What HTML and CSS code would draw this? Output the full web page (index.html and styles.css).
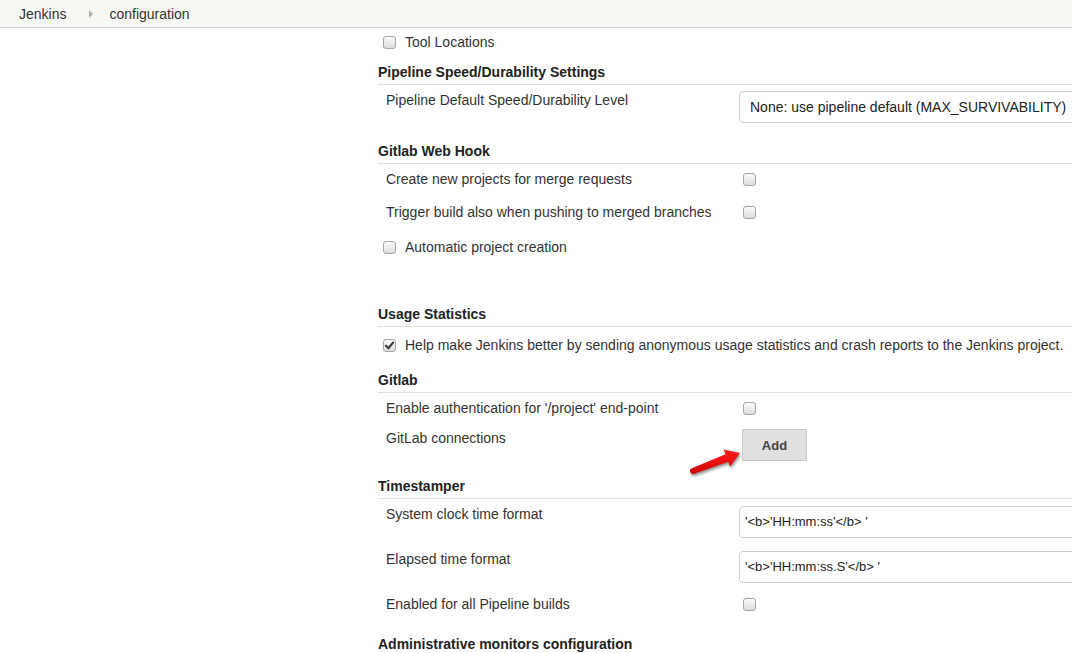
FILE: index.html
```html
<!DOCTYPE html>
<html>
<head>
<meta charset="utf-8">
<title>Jenkins configuration</title>
<link rel="stylesheet" href="styles.css">
</head>
<body>
<header class="topbar">
  <a class="crumb">Jenkins</a>
  <span class="crumb-sep"></span>
  <a class="crumb">configuration</a>
</header>

<main class="main">
  <div class="optional tool">
    <input type="checkbox" class="cb">
    <span>Tool Locations</span>
  </div>

  <div class="heading h-pipeline">Pipeline Speed/Durability Settings</div>
  <div class="row row-field r-pipeline">
    <div class="label">Pipeline Default Speed/Durability Level</div>
    <div class="value"><div class="select">None: use pipeline default (MAX_SURVIVABILITY)</div></div>
  </div>

  <div class="heading h-webhook">Gitlab Web Hook</div>
  <div class="row">
    <div class="label">Create new projects for merge requests</div>
    <div class="value"><input type="checkbox" class="cb"></div>
  </div>
  <div class="row">
    <div class="label">Trigger build also when pushing to merged branches</div>
    <div class="value"><input type="checkbox" class="cb"></div>
  </div>
  <div class="optional auto">
    <input type="checkbox" class="cb">
    <span>Automatic project creation</span>
  </div>

  <div class="heading h-usage">Usage Statistics</div>
  <div class="optional usage">
    <span class="cb checked"><svg viewBox="0 0 13 13" width="13" height="13"><path d="M3 6.8 L5.4 9.2 L10 3.6" fill="none" stroke="#333" stroke-width="2" stroke-linecap="square"/></svg></span>
    <span>Help make Jenkins better by sending anonymous usage statistics and crash reports to the Jenkins project.</span>
  </div>

  <div class="heading h-gitlab">Gitlab</div>
  <div class="row">
    <div class="label">Enable authentication for '/project' end-point</div>
    <div class="value"><input type="checkbox" class="cb"></div>
  </div>
  <div class="row row-button">
    <div class="label">GitLab connections</div>
    <div class="value">
      <button class="btn">Add</button>
      <svg class="arrow" viewBox="0 0 60 34" width="60" height="34">
        <defs>
          <linearGradient id="red" x1="0" y1="0" x2="0" y2="1">
            <stop offset="0" stop-color="#ff2020"/>
            <stop offset="1" stop-color="#d00000"/>
          </linearGradient>
        </defs>
        <path d="M5.9 23.2 L39.5 9.3 L37.7 4.6 L54 8 L44.1 21.4 L42.3 16.7 L8.1 28.8 A3 3 0 0 1 5.9 23.2 Z" fill="url(#red)"/>
      </svg>
    </div>
  </div>

  <div class="heading h-time">Timestamper</div>
  <div class="row row-field">
    <div class="label">System clock time format</div>
    <div class="value"><div class="input">'&lt;b&gt;'HH:mm:ss'&lt;/b&gt; '</div></div>
  </div>
  <div class="row row-field">
    <div class="label">Elapsed time format</div>
    <div class="value"><div class="input">'&lt;b&gt;'HH:mm:ss.S'&lt;/b&gt; '</div></div>
  </div>
  <div class="row">
    <div class="label">Enabled for all Pipeline builds</div>
    <div class="value"><input type="checkbox" class="cb"></div>
  </div>

  <div class="heading h-admin">Administrative monitors configuration</div>
</main>
</body>
</html>
```

FILE: styles.css
```css
html, body {
  margin: 0;
  padding: 0;
  overflow: hidden;
  background: #fff;
}
body {
  font-family: "Liberation Sans", Arial, sans-serif;
  font-size: 14px;
  color: #333;
  line-height: 16px;
}
.topbar {
  height: 27px;
  background: #f6f8f3;
  border-bottom: 1px solid #d6d6d6;
  display: flex;
  align-items: center;
  padding-left: 19px;
}
.crumb {
  font-size: 14px;
  color: #333;
  text-decoration: none;
}
.crumb-sep {
  width: 0;
  height: 0;
  border-left: 4px solid #b0b0b0;
  border-top: 4px solid transparent;
  border-bottom: 4px solid transparent;
  margin: 0 16px 0 23px;
}
.main {
  margin-left: 378px;
  width: 900px;
}
.heading {
  font-weight: bold;
  line-height: 24px;
  border-bottom: 1px solid #e2e2e2;
  color: #222;
}
.h-pipeline { margin-top: 7px; }
.h-webhook { margin-top: 16px; }
.h-usage { margin-top: 47px; }
.h-gitlab { margin-top: 15px; }
.h-time { margin-top: 13px; }
.h-admin { margin-top: 10px; }

.optional {
  display: flex;
  align-items: center;
  padding-left: 5px;
  gap: 9px;
}
.tool { padding-top: 3px; height: 22px; }
.auto { padding-top: 9px; height: 16px; }
.usage { padding-top: 10px; height: 16px; }

.row {
  display: flex;
  align-items: flex-start;
  padding: 7px 0 10px;
}
.label {
  width: 353px;
  padding-left: 8px;
  flex: none;
}
.value {
  flex: 1;
  display: flex;
  align-items: flex-start;
  position: relative;
}
.row .value .cb { margin-left: 4px; margin-top: 2px; }

.row-field { padding: 7px 0 6px; }
.r-pipeline { padding-bottom: 0; }
.r-pipeline .value { margin-top: -1px; }

.select, .input {
  height: 30px;
  border: 1px solid #cfcfcf;
  border-radius: 4px;
  line-height: 30px;
  white-space: nowrap;
  width: 420px;
  color: #222;
  flex: none;
}
.select { padding-left: 10px; font-size: 14px; }
.input { padding-left: 5px; font-size: 13px; }

.row-button { padding: 4px 0 0; }
.btn {
  margin-left: 3px;
  margin-top: -1px;
  width: 65px;
  height: 32px;
  background: #e0e0e0;
  border: 1px solid #c8c8c8;
  border-radius: 1px;
  font-family: "Liberation Sans", Arial, sans-serif;
  font-size: 13px;
  font-weight: bold;
  color: #444;
  padding: 0;
}
.arrow {
  position: absolute;
  left: -53px;
  top: 15px;
  filter: drop-shadow(1px 2px 1.5px rgba(0,0,0,0.45));
}

.cb {
  -webkit-appearance: none;
  appearance: none;
  display: inline-block;
  width: 13px;
  height: 13px;
  margin: 0;
  border: 1px solid #a6a6a6;
  border-radius: 3px;
  background: linear-gradient(#fbfbfb, #dcdcdc);
  box-sizing: border-box;
  flex: none;
}
.cb.checked {
  position: relative;
}
.cb.checked svg {
  position: absolute;
  left: -1px;
  top: -1px;
}
```
